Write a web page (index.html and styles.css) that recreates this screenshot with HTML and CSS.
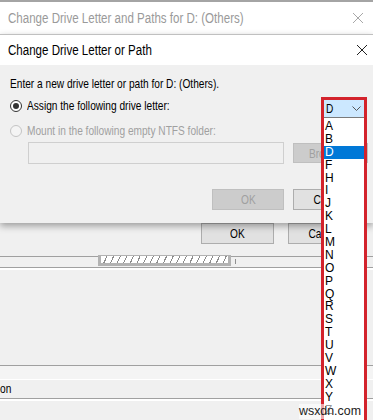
FILE: index.html
```html
<!DOCTYPE html>
<html lang="en">
<head>
    <meta charset="UTF-8">
    <title>Change Drive Letter or Path</title>
    <link rel="stylesheet" href="styles.css">
</head>
<body>
    <div class="screen">
        <!-- Window behind the dialog -->
        <div class="bg-title">
            <span class="t">Change Drive Letter and Paths for D: (Others)</span>
            <svg class="close" width="12" height="12" viewBox="0 0 12 12">
                <path d="M1 1 L11 11 M11 1 L1 11" stroke="#a8a8a8" stroke-width="1" fill="none"/>
            </svg>
        </div>

        <!-- Front dialog -->
        <div class="dialog">
            <div class="title-bar">
                <span class="t">Change Drive Letter or Path</span>
                <svg class="close" width="12" height="12" viewBox="0 0 12 12">
                    <path d="M1 1 L11 11 M11 1 L1 11" stroke="#222" stroke-width="1" fill="none"/>
                </svg>
            </div>
            <div class="dialog-body">
                <p class="prompt"><span class="t">Enter a new drive letter or path for D: (Others).</span></p>
                <div class="option">
                    <span class="radio checked"></span>
                    <span class="t">Assign the following drive letter:</span>
                </div>
                <div class="option option-off">
                    <span class="radio"></span>
                    <span class="t">Mount in the following empty NTFS folder:</span>
                </div>
                <div class="folder-row">
                    <div class="folder-input"></div>
                    <button class="btn btn-off btn-browse"><span class="t">Browse...</span></button>
                </div>
                <div class="actions">
                    <button class="btn btn-off"><span class="t">OK</span></button>
                    <button class="btn btn-cancel"><span class="t">Cancel</span></button>
                </div>
            </div>
        </div>

        <!-- Rest of the window behind -->
        <div class="bg-actions">
            <button class="btn"><span class="t">OK</span></button>
            <button class="btn btn-cancel-bg"><span class="t">Cancel</span></button>
        </div>

        <div class="disk-row">
            <div class="disk-line left"></div>
            <div class="disk-bar"></div>
            <div class="disk-line right"><span class="tick"></span></div>
        </div>

        <div class="bg-list">
            <div class="band"></div>
            <div class="list-row"><span class="t">on</span></div>
        </div>

        <!-- Open drive letter dropdown -->
        <div class="dropdown">
            <div class="combo">
                <span class="t">D</span>
                <svg width="9" height="6" viewBox="0 0 9 6">
                    <path d="M0.5 0.5 L4.5 4.5 L8.5 0.5" stroke="#555" stroke-width="1" fill="none"/>
                </svg>
            </div>
            <ul class="letters">
                <li>A</li>
                <li>B</li>
                <li class="selected">D</li>
                <li>F</li>
                <li>H</li>
                <li>I</li>
                <li>J</li>
                <li>K</li>
                <li>L</li>
                <li>M</li>
                <li>N</li>
                <li>O</li>
                <li>P</li>
                <li>Q</li>
                <li>R</li>
                <li>S</li>
                <li>T</li>
                <li>U</li>
                <li>V</li>
                <li>W</li>
                <li>X</li>
                <li>Y</li>
                <li>Z</li>
            </ul>
        </div>

        <div class="watermark">wsxdn.com</div>
    </div>
</body>
</html>
```
FILE: styles.css
```css
* {
    box-sizing: border-box;
}

body {
    margin: 0;
    background: #f0f0f0;
    font-family: "Liberation Sans", Arial, sans-serif;
    font-size: 13px;
    color: #000;
}

/* the old dialog font is tall and narrow */
.t {
    display: inline-block;
    white-space: nowrap;
    transform: scaleX(0.78);
    transform-origin: 0 50%;
}

.screen {
    position: relative;
    width: 373px;
    height: 420px;
    overflow: hidden;
    border-top: 2px solid #a4a4a4;
}

.bg-title {
    height: 32px;
    background: #fff;
    display: flex;
    align-items: center;
    justify-content: space-between;
    padding: 0 9px 0 8px;
    font-size: 14px;
    color: #9a9a9a;
}

.bg-title .t,
.title-bar .t {
    transform: scaleX(0.825);
}

.dialog {
    position: relative;
    z-index: 1;
    background: #f0f0f0;
    border-top: 1px solid #c0c0c0;
    box-shadow: 0 3px 7px rgba(0,0,0,0.35);
}

.title-bar {
    height: 30px;
    background: #fff;
    display: flex;
    align-items: center;
    justify-content: space-between;
    padding: 0 5px 0 8px;
    font-size: 14px;
}

.dialog-body {
    height: 158px;
    padding: 12px 0 0 10px;
}

.prompt {
    margin: 0;
    height: 14px;
    line-height: 14px;
}

.option {
    display: flex;
    align-items: center;
    gap: 5px;
    height: 14px;
    line-height: 14px;
    margin-top: 8px;
}

.option-off {
    margin-top: 11px;
    color: #a0a0a0;
}

.radio {
    flex: none;
    width: 12px;
    height: 12px;
    border: 1px solid #333;
    border-radius: 50%;
    display: flex;
    align-items: center;
    justify-content: center;
    background: #fff;
}

.radio.checked::after {
    content: "";
    width: 6px;
    height: 6px;
    border-radius: 50%;
    background: #333;
}

.option-off .radio {
    border-color: #c4c4c4;
    background: #f4f4f4;
}

.folder-row {
    display: flex;
    align-items: flex-start;
    margin-top: 4px;
    padding-left: 18px;
}

.folder-input {
    width: 256px;
    height: 22px;
    border: 1px solid #cfcfcf;
    background: #f0f0f0;
}

.btn {
    font: inherit;
    height: 21px;
    padding: 0;
    border: 1px solid #adadad;
    background: #e1e1e1;
    color: #000;
    text-align: center;
}

.btn .t {
    transform-origin: 50% 50%;
}

.btn-off {
    background: #cccccc;
    border-color: #bfbfbf;
    color: #a0a0a0;
}

.btn-browse {
    width: 75px;
    height: 20px;
    margin: 1px 0 0 9px;
}

.actions {
    display: flex;
    margin-top: 25px;
    padding-left: 202px;
}

.actions .btn {
    width: 72px;
}

.actions .btn-cancel {
    width: 73px;
    margin-left: 9px;
}

.bg-actions {
    display: flex;
    padding-left: 201px;
}

.bg-actions .btn {
    width: 73px;
    height: 21px;
}

.bg-actions .btn-cancel-bg {
    margin-left: 14px;
}

.disk-row {
    display: flex;
    align-items: flex-start;
    height: 13px;
    margin-top: 11px;
    border-bottom: 1px solid #a0a0a0;
    box-shadow: 0 2px 0 #fff;
}

.disk-line {
    border-top: 1px solid #a0a0a0;
    margin-top: 1px;
}

.disk-line.left {
    width: 98px;
}

.disk-line.right {
    flex: 1;
    padding-left: 4px;
}

.tick {
    display: block;
    width: 1px;
    height: 5px;
    margin-top: 2px;
    background: #909090;
}

.disk-bar {
    width: 133px;
    height: 11px;
    border: 3px solid #b2b2b2;
    border-top-width: 1px;
    background: repeating-linear-gradient(115deg, #fff 0 5px, #8c8c8c 5px 6px);
}

.bg-list {
    margin-top: 97px;
    border-top: 1px solid #a0a0a0;
    border-bottom: 1px solid #a0a0a0;
    box-shadow: 0 2px 0 #fff;
}

.band {
    height: 14px;
    background: #f4f4f4;
    border-bottom: 1px solid #fff;
}

.list-row {
    height: 18px;
    line-height: 18px;
}

.dropdown {
    position: absolute;
    z-index: 2;
    left: 321px;
    top: 95px;
    width: 46px;
    height: 340px;
    border: 3px solid #d3232c;
    background: #fff;
}

.combo {
    height: 17px;
    background: #cce8ff;
    display: flex;
    align-items: center;
    justify-content: space-between;
    padding: 0 3px 0 2px;
}

.letters {
    list-style: none;
    margin: 0;
    padding: 2px 0 0;
    border-top: 1px solid #7a7a7a;
}

.letters li {
    height: 12.9px;
    line-height: 12.9px;
    padding-left: 1px;
    font-size: 12px;
}

.letters li.selected {
    background: #0078d7;
    color: #fff;
}

.watermark {
    position: absolute;
    z-index: 3;
    left: 299px;
    top: 402px;
    font-size: 12.4px;
    line-height: 15px;
    color: #222;
    background: rgba(255,255,255,0.6);
}
```
